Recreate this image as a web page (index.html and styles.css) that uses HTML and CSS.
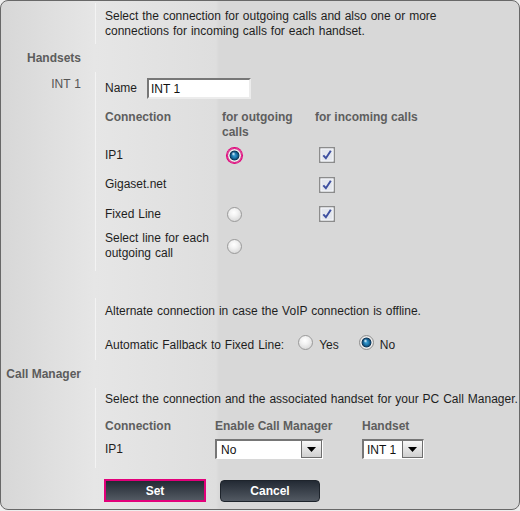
FILE: index.html
```html
<!DOCTYPE html>
<html lang="en">
<head>
  <meta charset="UTF-8">
  <title>Connection Assignment</title>
  <link rel="stylesheet" href="styles.css">
</head>
<body>

  <form class="panel" onsubmit="return false;">

    <div class="group intro">
      <div class="side"></div>
      <div class="body">
        <p>Select the connection for outgoing calls and also one or more<br>connections for incoming calls for each handset.</p>
      </div>
    </div>

    <div class="heading"><div class="side">Handsets</div></div>

    <div class="group handset">
      <div class="side">INT 1</div>
      <div class="body">
        <div class="name-row">
          <label for="hs_name">Name</label>
          <input type="text" id="hs_name" value="INT 1">
        </div>
        <div class="lines">
          <span class="th">Connection</span>
          <span class="th">for outgoing calls</span>
          <span class="th">for incoming calls</span>

          <span>IP1</span>
          <span class="radio on focus"></span>
          <span class="check"><svg width="16" height="16" viewBox="0 0 16 16"><rect x="0.75" y="0.75" width="14.5" height="14.5" fill="#e4e7ee" stroke="#8c8c8c" stroke-width="1.5"/><rect x="2" y="2" width="12" height="12" fill="none" stroke="#f6f7fa"/><path d="M4.3 8.3 L6.9 11.2 L11.8 3.8" fill="none" stroke="#3f51a1" stroke-width="2"/></svg></span>

          <span>Gigaset.net</span>
          <span></span>
          <span class="check"><svg width="16" height="16" viewBox="0 0 16 16"><rect x="0.75" y="0.75" width="14.5" height="14.5" fill="#e4e7ee" stroke="#8c8c8c" stroke-width="1.5"/><rect x="2" y="2" width="12" height="12" fill="none" stroke="#f6f7fa"/><path d="M4.3 8.3 L6.9 11.2 L11.8 3.8" fill="none" stroke="#3f51a1" stroke-width="2"/></svg></span>

          <span>Fixed Line</span>
          <span class="radio"></span>
          <span class="check"><svg width="16" height="16" viewBox="0 0 16 16"><rect x="0.75" y="0.75" width="14.5" height="14.5" fill="#e4e7ee" stroke="#8c8c8c" stroke-width="1.5"/><rect x="2" y="2" width="12" height="12" fill="none" stroke="#f6f7fa"/><path d="M4.3 8.3 L6.9 11.2 L11.8 3.8" fill="none" stroke="#3f51a1" stroke-width="2"/></svg></span>

          <span>Select line for each<br>outgoing call</span>
          <span class="radio"></span>
          <span></span>
        </div>
      </div>
    </div>

    <div class="heading short"><div class="side"></div></div>

    <div class="group fallback">
      <div class="side"></div>
      <div class="body">
        <p>Alternate connection in case the VoIP connection is offline.</p>
        <div class="choice-row">
          <span>Automatic Fallback to Fixed Line:</span>
          <span class="radio yes"></span><span class="opt">Yes</span>
          <span class="radio on no"></span><span class="opt">No</span>
        </div>
      </div>
    </div>

    <div class="heading"><div class="side">Call Manager</div></div>

    <div class="group manager">
      <div class="side"></div>
      <div class="body">
        <p class="nowrap">Select the connection and the associated handset for your PC Call Manager.</p>
        <div class="cm-grid">
          <span class="th">Connection</span>
          <span class="th">Enable Call Manager</span>
          <span class="th">Handset</span>

          <span>IP1</span>
          <div class="select wide">
            <select><option>No</option><option>Yes</option></select>
            <span class="arrow"><svg width="9" height="5" viewBox="0 0 9 5"><polygon points="0,0 9,0 4.5,5" fill="#000"/></svg></span>
          </div>
          <div class="select narrow">
            <select><option>INT 1</option></select>
            <span class="arrow"><svg width="9" height="5" viewBox="0 0 9 5"><polygon points="0,0 9,0 4.5,5" fill="#000"/></svg></span>
          </div>
        </div>
      </div>
    </div>

    <div class="buttons">
      <button type="submit" class="btn set">Set</button>
      <button type="button" class="btn cancel">Cancel</button>
    </div>

  </form>

</body>
</html>
```

FILE: styles.css
```css
body {
  margin: 0;
  background-color: #eeeeee;
  font-family: "Liberation Sans", Arial, sans-serif;
  font-size: 12px;
  line-height: 15px;
  word-spacing: 0.6px;
  color: #1e1e1e;
}
p {
  margin: 0;
}
.panel {
  width: 520px;
  height: 510px;
  box-sizing: border-box;
  border: 1px solid #686868;
  border-radius: 8px;
  padding-top: 2px;
  background: linear-gradient(to right, #d7d7d7 0, #e6e6e6 94px, #dedede 215px, #d8d8d8 218px);
  overflow: hidden;
}
.group,
.heading {
  display: grid;
  grid-template-columns: 94px 1fr;
}
.side {
  padding-right: 14px;
  text-align: right;
  color: #555;
}
.body {
  border-left: 1px solid #f3f3f3;
  padding-left: 9px;
}
.heading {
  height: 28px;
  line-height: 28px;
}
.heading .side {
  font-weight: bold;
  color: #5c5c5c;
  word-spacing: 0;
}
.heading.short {
  height: 27px;
}
.th {
  font-weight: bold;
  color: #5e5e5e;
  align-self: start;
  word-spacing: 0;
}
.nowrap {
  white-space: nowrap;
}

/* intro */
.intro .body {
  padding-top: 6px;
  padding-bottom: 5px;
}

/* handset */
.handset {
  height: 199px;
}
.handset .side {
  padding-top: 5px;
}
.handset .body {
  padding-top: 6px;
}
.name-row {
  display: flex;
  align-items: center;
  gap: 10px;
  height: 21px;
  margin-bottom: 11px;
}
.name-row input {
  width: 104px;
  height: 21px;
  box-sizing: border-box;
  margin: 0;
  padding: 0 2px;
  border: 2px solid;
  border-color: #777 #ececec #ececec #777;
  font-family: inherit;
  font-size: 12px;
  color: #111;
  background: #fff;
}
.lines {
  display: grid;
  grid-template-columns: 117px 93px 1fr;
  grid-template-rows: 30px 30px 29px 30px 34px;
  align-items: center;
}
.lines .radio {
  margin-left: 5px;
}
.check {
  display: flex;
  margin-left: 4px;
}

/* radios */
.radio {
  display: inline-block;
  width: 15px;
  height: 15px;
  box-sizing: border-box;
  border-radius: 50%;
  border: 1px solid #9a9a9a;
  background: radial-gradient(circle at 45% 35%, #ffffff 0, #f2f2f2 35%, #cdcdcd 100%);
}
.radio.on {
  border-color: #8f8f8f;
  background:
    radial-gradient(circle at 42% 38%, #e4f5ff 0, rgba(228, 245, 255, 0) 2px),
    radial-gradient(circle at 50% 50%, #3aa2d8 0, #1e78ad 2.4px, #0f4a75 4px, #16324d 4.6px, #f2f2f2 5.3px, #d2d2d2 7.5px);
}
.radio.focus {
  border: 1px solid #e2007a;
  box-shadow: 0 0 0 1px #e2007a;
}

/* fallback */
.fallback .body {
  padding-top: 6px;
  padding-bottom: 7px;
}
.choice-row {
  display: flex;
  align-items: center;
  margin-top: 19px;
}
.choice-row .radio {
  margin-top: -3px;
  margin-bottom: 3px;
}
.choice-row .yes {
  margin-left: 14px;
}
.choice-row .no {
  margin-left: 20px;
}
.opt {
  margin-left: 6px;
}

/* call manager */
.manager .body {
  padding-top: 4px;
  padding-bottom: 9px;
}
.cm-grid {
  display: grid;
  grid-template-columns: 110px 147px auto;
  grid-template-rows: 15px 20px;
  row-gap: 5px;
  margin-top: 12px;
  align-items: center;
}
.select {
  display: flex;
  align-items: center;
  height: 20px;
  box-sizing: border-box;
  border-style: solid;
  border-width: 2px 1px 1px 2px;
  border-color: #767676 #fff #fff #767676;
  background: #fff;
}
.select.wide {
  width: 108px;
}
.select.narrow {
  width: 62px;
}
.select select {
  flex: 1;
  min-width: 0;
  appearance: none;
  -webkit-appearance: none;
  border: none;
  background: transparent;
  margin: 0;
  padding: 0 0 0 4px;
  font-family: inherit;
  font-size: 12px;
  color: #111;
  outline: none;
}
.select.narrow select {
  padding-left: 3px;
}
.arrow {
  display: flex;
  align-items: center;
  justify-content: center;
  width: 21px;
  height: 17px;
  box-sizing: border-box;
  border: 1px solid #6e6e6e;
  border-top: none;
  background: linear-gradient(#f8f8f8, #cfcfcf);
  align-self: flex-start;
}

/* buttons */
.buttons {
  display: flex;
  align-items: flex-start;
  gap: 14px;
  margin-top: 11px;
  padding-left: 103px;
}
.btn {
  font-family: inherit;
  font-size: 12px;
  font-weight: bold;
  color: #fff;
  padding: 0;
  cursor: pointer;
  background: linear-gradient(#232a34, #525962);
}
.btn.set {
  width: 102px;
  height: 23px;
  border: 2px solid #e2007a;
}
.btn.cancel {
  width: 100px;
  height: 22px;
  margin-top: 1px;
  border: 1px solid #1e242c;
  border-radius: 4px;
}
```
